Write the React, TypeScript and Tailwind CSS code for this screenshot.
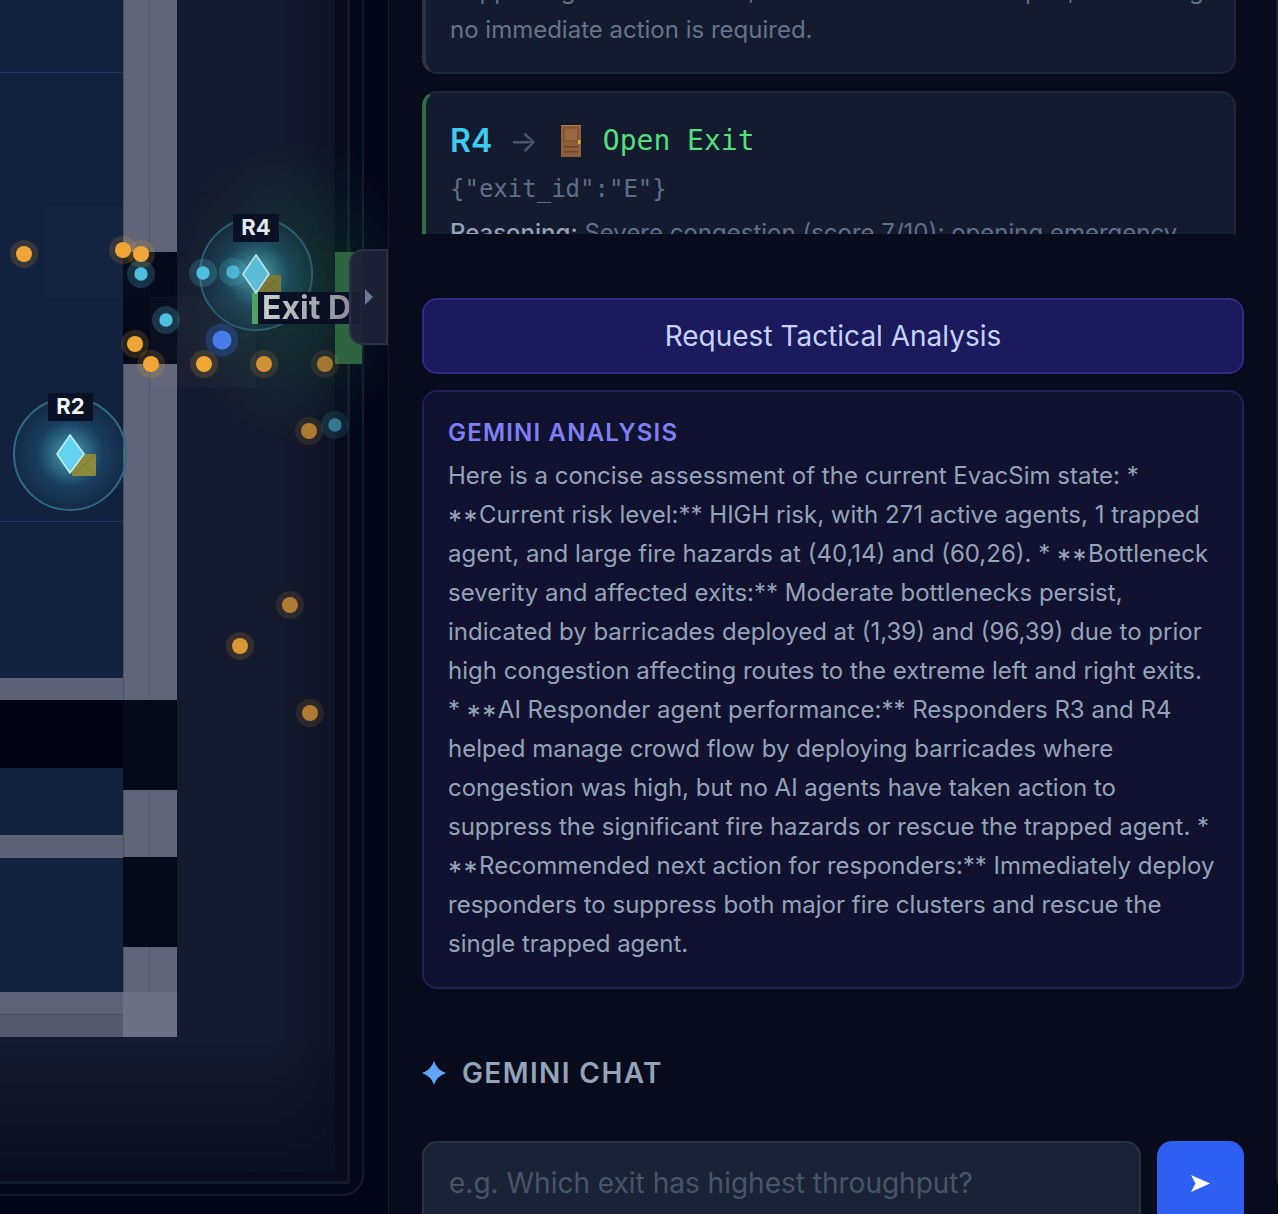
import React from "react";

const agents: [number, number, string, number][] = [
  [24, 254, "o", 1],
  [123, 250, "o", 1],
  [141, 254, "o", 1],
  [135, 344, "o", 1],
  [151, 364, "o", 1],
  [204, 364, "o", 1],
  [264, 364, "o", 0.85],
  [325, 364, "o", 0.65],
  [309, 431, "o", 0.7],
  [290, 605, "o", 0.7],
  [240, 646, "o", 0.9],
  [310, 713, "o", 0.7],
  [141, 274, "c", 1],
  [203, 273, "c", 1],
  [233, 272, "c", 0.9],
  [166, 320, "c", 1],
  [335, 425, "c", 0.6],
];

function FloorPlan() {
  return (
    <svg width="389" height="1214" viewBox="0 0 389 1214" className="absolute left-0 top-0 block">
      <defs>
        <linearGradient id="fade" x1="0" y1="0" x2="1" y2="0">
          <stop offset="0.5" stopColor="#151b2e" stopOpacity="0" />
          <stop offset="1" stopColor="#0a0f20" stopOpacity="1" />
        </linearGradient>
        <linearGradient id="fadeB" x1="0" y1="0" x2="0" y2="1">
          <stop offset="0" stopColor="#0a0f20" stopOpacity="0" />
          <stop offset="1" stopColor="#0a0f20" stopOpacity="1" />
        </linearGradient>
        <radialGradient id="rg" cx="0.5" cy="0.5" r="0.5">
          <stop offset="0" stopColor="#7fe8e0" stopOpacity="0.68" />
          <stop offset="0.6" stopColor="#38bdf8" stopOpacity="0.18" />
          <stop offset="1" stopColor="#38bdf8" stopOpacity="0.05" />
        </radialGradient>
        <radialGradient id="exitGlow" cx="0.5" cy="0.5" r="0.5">
          <stop offset="0" stopColor="#22c55e" stopOpacity="0.16" />
          <stop offset="1" stopColor="#22c55e" stopOpacity="0" />
        </radialGradient>
      </defs>

      <rect x="-20" y="-20" width="383" height="1215" rx="20" fill="#03071a" stroke="#1a2033" strokeWidth="1.5" />
      <rect x="-20" y="-20" width="370" height="1204" fill="#141a2c" />
      <rect x="-20" y="-20" width="367" height="1201" fill="#151b2e" />
      <rect x="177" y="0" width="170" height="1181" fill="url(#fade)" />
      <rect x="0" y="1037" width="347" height="144" fill="url(#fadeB)" />
      <rect x="335" y="0" width="12" height="1181" fill="#070b1c" />
      <rect x="0" y="1172" width="347" height="9" fill="#070b1c" />

      <rect x="0" y="0" width="123" height="1037" fill="#12213d" />
      <rect x="0" y="72" width="123" height="1" fill="#24345f" />
      <rect x="0" y="521" width="123" height="1" fill="#24345f" />

      <rect x="0" y="678" width="123" height="22" fill="#5c6274" />
      <rect x="0" y="700" width="123" height="68" fill="#020414" />
      <rect x="0" y="835" width="123" height="23" fill="#5c6274" />
      <rect x="0" y="992" width="123" height="23" fill="#5e6275" />
      <rect x="0" y="1015" width="123" height="22" fill="#555a6c" />
      <rect x="0" y="1014" width="123" height="1" fill="#484d5e" />

      <rect x="123" y="0" width="54" height="1037" fill="#5f6476" />
      <rect x="149" y="0" width="1" height="1037" fill="#525769" />
      <rect x="123" y="0" width="1" height="1037" fill="#4c5266" />
      <rect x="123" y="252" width="54" height="112" fill="#050a1a" />
      <rect x="123" y="700" width="54" height="90" fill="#040a18" />
      <rect x="123" y="857" width="54" height="90" fill="#040a18" />
      <rect x="123" y="992" width="54" height="45" fill="#6c7083" />

      <rect x="44" y="207" width="106" height="90" fill="#ffffff" fillOpacity="0.012" />
      <rect x="150" y="297" width="106" height="90" fill="#ffffff" fillOpacity="0.025" />

      <ellipse cx="300" cy="290" rx="130" ry="150" fill="url(#exitGlow)" />
      <rect x="335" y="252" width="27" height="112" fill="#2d6540" />

      <circle cx="256" cy="274" r="56" fill="url(#rg)" stroke="#2a5d73" strokeWidth="2" />
      <circle cx="70" cy="454" r="56" fill="url(#rg)" stroke="#2f6a85" strokeWidth="2" />

      {agents.map(([x, y, k, op], i) => (
        <g key={i} opacity={op}>
          <circle cx={x} cy={y} r="14" fill={k === "o" ? "#f5a83a" : "#5fd0ea"} fillOpacity={k === "o" ? 0.16 : 0.2} />
          <circle cx={x} cy={y} r={k === "o" ? 8 : 6.7} fill={k === "o" ? "#f0a537" : "#50bede"} />
        </g>
      ))}
      <circle cx="222" cy="340" r="16.5" fill="#3b6fe8" fillOpacity="0.28" />
      <circle cx="222" cy="340" r="9.5" fill="#4a7bea" />

      <rect x="72" y="454" width="24" height="22" fill="#8d8a3c" />
      <path d="M72 454L96 476M96 454L72 476" stroke="#7c7a38" strokeWidth="1" />
      <path d="M70 435L84 454L70 473L57 454Z" fill="#62d3f0" stroke="#c7f2fb" strokeWidth="1.5" />

      <rect x="257" y="275" width="24" height="21" fill="#7c7a38" />
      <path d="M257 275L281 296M281 275L257 296" stroke="#6b6a33" strokeWidth="1" />
      <rect x="252" y="292" width="6" height="32" fill="#4aa565" />
      <path d="M256 255L269 274L256 293L243 274Z" fill="#5cbcd8" stroke="#bfeaf3" strokeWidth="1.5" />
    </svg>
  );
}

function Label({ className, children }: { className: string; children: React.ReactNode }) {
  return (
    <div className={`absolute flex h-7 items-center justify-center bg-[#0a1124] pb-[2px] text-[22px] font-bold ${className}`}>
      {children}
    </div>
  );
}

function MapPanel() {
  return (
    <div className="relative h-[1214px] w-[389px] shrink-0 overflow-hidden border-r border-[#151a2c] bg-[#020418]">
      <FloorPlan />
      <Label className="left-[48px] top-[393px] w-[45px] text-[#f1f5f9]">R2</Label>
      <Label className="left-[233px] top-[214px] w-[46px] text-[#e2e8f0]">R4</Label>
      <div className="absolute left-[258px] top-[292px] flex h-8 w-[102px] items-center overflow-hidden whitespace-nowrap bg-[#0a1024] pl-1 text-[32px] font-bold leading-8">
        <span className="bg-linear-to-r from-[#c8cfcc] to-[#8c8c9a] bg-clip-text text-transparent">Exit D</span>
      </div>
      <div className="absolute left-[349px] top-[249px] flex h-[96px] w-[39px] items-center justify-center rounded-l-[14px] border-2 border-[#2a3148] bg-[#1d2236]/95">
        <svg width="8" height="16" viewBox="0 0 8 16"><path d="M0 0L8 8L0 16Z" fill="#6b7896" /></svg>
      </div>
    </div>
  );
}

function DoorIcon() {
  return (
    <svg width="20" height="32" viewBox="0 0 20 32" className="block shrink-0">
      <rect x="0" y="0" width="20" height="32" fill="#8f5f3d" />
      <rect x="0" y="0" width="20" height="1" fill="#b17a50" />
      <rect x="3" y="3" width="14" height="13" fill="#9a6541" stroke="#7a4d30" strokeWidth="1" />
      <rect x="3" y="21" width="14" height="1.5" fill="#6f4429" />
      <rect x="3" y="26" width="14" height="1.5" fill="#6f4429" />
      <rect x="17" y="15" width="2.5" height="4" fill="#e0b02c" />
    </svg>
  );
}

function TacticalCards() {
  return (
    <div className="h-[234px] shrink-0 overflow-hidden pr-2">
      <div className="-mt-[48px] mb-[17px] h-[122px] overflow-hidden rounded-[15px] border-2 border-l-4 border-[#1e2638] border-l-[#2b3448] bg-[#141b2e] px-6 pt-[17px] text-[24px] leading-[39px] text-[#64748b]">
        <div className="whitespace-nowrap">Supporting the crowd flow, the exits must remain open, confirming</div>
        <div>no immediate action is required.</div>
      </div>
      <div className="h-[200px] rounded-[15px] border-2 border-l-4 border-[#1e2638] border-l-[#2f6b45] bg-[#141b2e] px-6 pt-[30px]">
        <div className="flex h-9 items-center">
          <span className="text-[32px] font-semibold text-[#3ecbf1]">R4</span>
          <span className="ml-[17px] mr-[23px] text-[30px] text-[#4b5567]">→</span>
          <DoorIcon />
          <span className="ml-[22px] font-['DejaVu_Sans_Mono',monospace] text-[28px] text-[#53df7e]">Open Exit</span>
        </div>
        <div className="mt-[12px] font-['DejaVu_Sans_Mono',monospace] text-[24px] leading-9 text-[#5f6f88]">{'{"exit_id":"E"}'}</div>
        <div className="mt-[8px] whitespace-nowrap text-[24px] leading-9 text-[#5f6f88]">
          <b className="font-medium text-[#94a3b8]">Reasoning:</b> Severe congestion (score 7/10); opening emergency
        </div>
      </div>
    </div>
  );
}

function Stars() {
  return <span className="align-[-8px] text-[28px] leading-[0px] tracking-[1.5px]">**</span>;
}

function Analysis() {
  return (
    <div className="mt-4 h-[599px] shrink-0 rounded-[15px] border-2 border-[#211f58] bg-[#11122f] pl-[24px] pr-[26px] pt-[25px]">
      <div className="text-[24px] font-semibold leading-[32px] tracking-[1.2px] text-[#7f7ff5]">GEMINI ANALYSIS</div>
      <p className="mt-[7px] text-[24px] leading-[39px] text-[#94a3b8]">
        Here is a concise assessment of the current EvacSim state: * <Stars />Current risk level:** HIGH risk, with 271 active agents, 1 trapped agent, and large fire hazards at (40,14) and (60,26). * <Stars />Bottleneck severity and affected exits:** Moderate bottlenecks persist, indicated by barricades deployed at (1,39) and (96,39) due to prior high congestion affecting routes to the extreme left and right exits. * <Stars />AI Responder agent performance:** Responders R3 and R4 helped manage crowd flow by deploying barricades where congestion was high, but no AI agents have taken action to suppress the significant fire hazards or rescue the trapped agent. * <Stars />Recommended next action for responders:** Immediately deploy responders to suppress both major fire clusters and rescue the single trapped agent.
      </p>
    </div>
  );
}

export default function App() {
  return (
    <div className="flex h-[1214px] w-[1278px] overflow-hidden bg-[#070b1b] font-['Inter',sans-serif]">
      <MapPanel />
      <div className="relative flex min-w-0 flex-1 flex-col pl-[33px] pr-[34px]">
        <TacticalCards />
        <button className="mt-[64px] h-[76px] shrink-0 rounded-[15px] border-2 border-[#2f2b87] bg-[#1a1a5c] text-[28px] text-[#c7d2fe]">
          Request Tactical Analysis
        </button>
        <Analysis />
        <div className="mt-[68px] flex h-8 shrink-0 items-center">
          <svg width="24" height="24" viewBox="0 0 24 24" className="block shrink-0">
            <path d="M12 0Q15 9 24 12Q15 15 12 24Q9 15 0 12Q9 9 12 0Z" fill="#60a5fa" />
          </svg>
          <span className="ml-[16px] text-[28px] font-semibold tracking-[1.4px] text-[#94a3b8]">GEMINI CHAT</span>
        </div>
        <div className="mt-[52px] flex h-[90px] shrink-0 gap-4">
          <input
            readOnly
            placeholder="e.g. Which exit has highest throughput?"
            className="h-full min-w-0 flex-1 rounded-[15px] border-2 border-[#283244] bg-[#1a2335] px-[25px] pb-[6px] text-[28px] outline-none placeholder:text-[#475569]"
          />
          <button className="flex h-full w-[87px] shrink-0 justify-center rounded-[15px] bg-[#2d5ff0] pt-[34px]">
            <svg width="19" height="17" viewBox="0 0 19 17" className="block"><path d="M0 0L19 8.5L0 17L4.5 8.5Z" fill="#fff" /></svg>
          </button>
        </div>
        <div className="absolute right-0 top-0 h-[1182px] w-[2px] rounded-b-sm bg-[#1c2233]" />
      </div>
    </div>
  );
}
